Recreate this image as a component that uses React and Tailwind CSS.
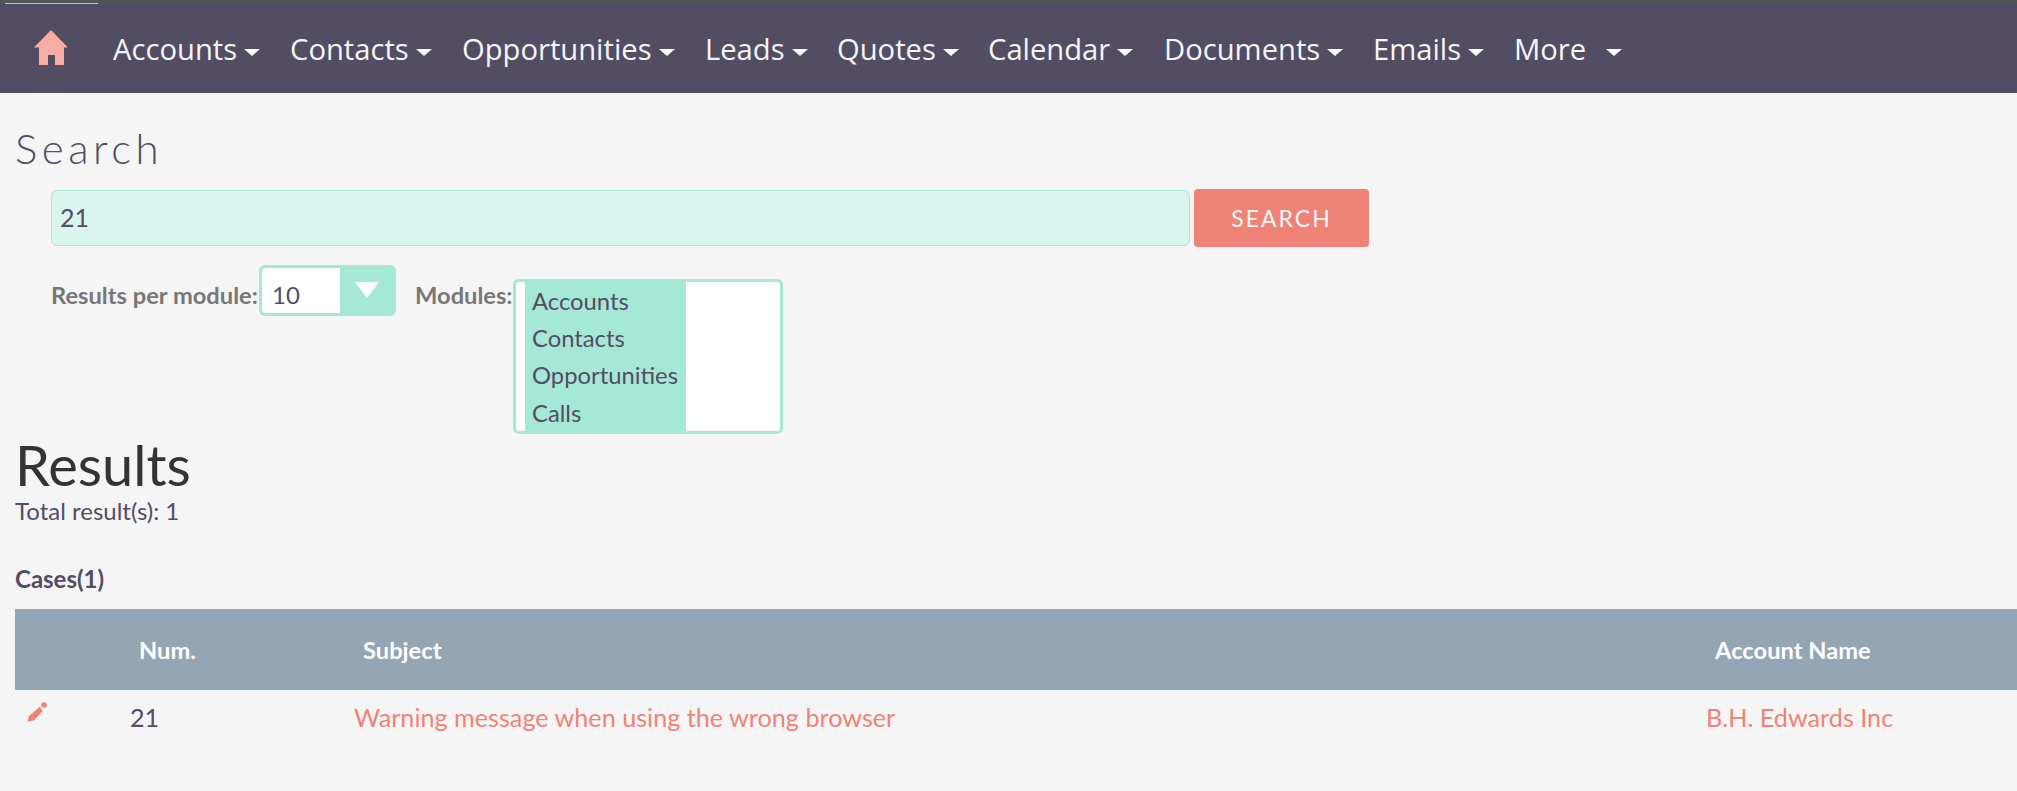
const navItems = [
  { label: 'Accounts', width: 'w-[177px]' },
  { label: 'Contacts', width: 'w-[172px]' },
  { label: 'Opportunities', width: 'w-[243px]' },
  { label: 'Leads', width: 'w-[132px]' },
  { label: 'Quotes', width: 'w-[151px]' },
  { label: 'Calendar', width: 'w-[176px]' },
  { label: 'Documents', width: 'w-[209px]' },
  { label: 'Emails', width: 'w-[141px]' },
];

const modules = ['Accounts', 'Contacts', 'Opportunities', 'Calls'];

function Caret({ className = '' }) {
  return <span className={`inline-block border-x-[8px] border-t-[7px] border-x-transparent border-t-white ${className}`} />;
}

function TopNav() {
  return (
    <div className="h-[93px] bg-[#534d64] border-t-[3px] border-[#4f5658] relative flex items-center font-['Open_Sans',sans-serif] text-[29.2px] text-[#f5f5f5]">
      <span className="absolute left-[5px] top-0 h-[1px] w-[93px] bg-[#f7aca4]" />
      <div className="w-[113px] pl-[34px] flex items-center">
        <svg viewBox="0 0 34 36" className="w-[34px] h-[36px]" fill="#f7aca4">
          <path d="M17 0 L34 17.5 L30 17.5 L30 35 L21 35 L21 25 L14 25 L14 35 L5 35 L5 17.5 L0 17.5 Z" />
        </svg>
      </div>
      {navItems.map((item) => (
        <div key={item.label} className={`${item.width} flex items-center gap-[7px] pt-[4px]`}>
          <span>{item.label}</span>
          <Caret className="mt-[5px]" />
        </div>
      ))}
      <div className="flex items-center gap-[20px] pt-[4px]">
        <span>More</span>
        <Caret className="mt-[5px]" />
      </div>
    </div>
  );
}

function SearchForm() {
  return (
    <div className="pl-[51px]">
      <div className="flex items-center gap-[4px]">
        <div className="w-[1139px] h-[56px] bg-[#d9f5ee] border border-[#a5e8d6] rounded-[6px] pl-[8px] flex items-center text-[25px] text-[#534d64]">21</div>
        <button className="w-[175px] h-[58px] bg-[#f08377] rounded-[4px] text-[23px] tracking-[2px] text-[#f5f5f5]">SEARCH</button>
      </div>
      <div className="flex items-start mt-[18px] text-[24px]">
        <span className="font-bold text-[#777] mt-[13px] w-[208px] whitespace-nowrap text-[23.7px]">Results per module:</span>
        <div className="w-[137px] h-[51px] bg-[#a5e8d6] rounded-[6px] p-[3px] flex">
          <div className="w-[78px] bg-white rounded-l-[4px] pl-[10px] pt-[8px] flex items-center text-[#534d64]">10</div>
          <div className="flex-1 flex justify-center pt-[14px]">
            <span className="h-0 border-x-[12px] border-t-[16px] border-x-transparent border-t-white" />
          </div>
        </div>
        <span className="font-bold text-[#777] mt-[13px] ml-[19px] w-[98px] text-[23.7px]">Modules:</span>
        <div className="mt-[14px] w-[270px] h-[155px] border-[3px] border-[#a5e8d6] rounded-[6px] bg-white pl-[9px]">
          <div className="w-[161px] h-full bg-[#a5e8d6] pl-[7px] pt-[1px] text-[23.8px] text-[#534d64] leading-[37.2px]">
            {modules.map((m) => (
              <div key={m}>{m}</div>
            ))}
          </div>
        </div>
      </div>
    </div>
  );
}

function ResultsTable() {
  return (
    <div className="mt-[15px] ml-[15px]">
      <div className="h-[81px] bg-[#94a6b4] flex items-center text-white font-bold text-[23.7px] pt-[2px]">
        <span className="ml-[124px] w-[224px]">Num.</span>
        <span className="w-[1352px]">Subject</span>
        <span>Account Name</span>
      </div>
      <div className="flex text-[25.2px] h-[56px] items-center">
        <svg viewBox="0 0 20 20" className="w-[20px] h-[20px] ml-[12px] mt-[12px] self-start" fill="#f08377">
          <path d="M0.3 19.7 L2 14 L13 4.6 L15.7 9 L7.3 18.3 Z" />
          <circle cx="17" cy="3" r="2.8" />
        </svg>
        <span className="ml-[83px] w-[224px] text-[#534d64]">21</span>
        <a className="w-[1352px] text-[#f08377]">Warning message when using the wrong browser</a>
        <a className="text-[#f08377]">B.H. Edwards Inc</a>
      </div>
    </div>
  );
}

export default function App() {
  return (
    <div className="min-h-[791px] bg-[#f5f5f5] font-['Lato',sans-serif] overflow-hidden">
      <TopNav />
      <div className="pt-[31px]">
        <h2 className="pl-[15px] text-[42px] leading-[48px] font-light tracking-[4.5px] text-[#534d64] mb-[17px]">Search</h2>
        <SearchForm />
        <h1 className="pl-[15px] mt-[1px] text-[56px] leading-[60px] text-[#333]">Results</h1>
        <div className="pl-[15px] text-[24px] leading-[30px] text-[#534d64] mt-[1px]">Total result(s): 1</div>
        <div className="pl-[15px] mt-[38px] text-[24px] leading-[30px] font-bold text-[#534d64]">Cases(1)</div>
        <ResultsTable />
      </div>
    </div>
  );
}
